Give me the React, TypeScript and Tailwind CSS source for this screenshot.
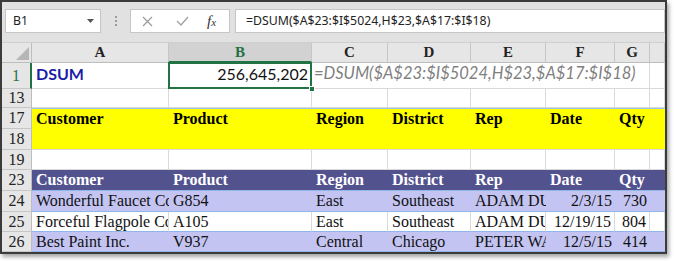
const serif = "font-['Liberation_Serif',serif]";
const calibri = "font-['Lato','Liberation_Sans',sans-serif]";

const W = ["w-[137px]", "w-[143px]", "w-[76px]", "w-[83px]", "w-[75px]", "w-[69px]", "w-[35px]", "w-[15px]"];
const letters = ["A", "B", "C", "D", "E", "F", "G", ""];

type Cell = { t?: string; r?: boolean };

const rows: { n: string; cells: Cell[]; bg: string }[] = [
  {
    n: "24",
    bg: "bg-[#c4c4f3]",
    cells: [{ t: "Wonderful Faucet Co" }, { t: "G854" }, { t: "East" }, { t: "Southeast" }, { t: "ADAM DUNN" }, { t: "2/3/15", r: true }, { t: "730", r: true }, {}],
  },
  {
    n: "25",
    bg: "bg-white",
    cells: [{ t: "Forceful Flagpole Co" }, { t: "A105" }, { t: "East" }, { t: "Southeast" }, { t: "ADAM DUNN" }, { t: "12/19/15", r: true }, { t: "804", r: true }, {}],
  },
  {
    n: "26",
    bg: "bg-[#c4c4f3]",
    cells: [{ t: "Best Paint Inc." }, { t: "V937" }, { t: "Central" }, { t: "Chicago" }, { t: "PETER WATERS" }, { t: "12/5/15", r: true }, { t: "414", r: true }, {}],
  },
];

const heads = ["Customer", "Product", "Region", "District", "Rep", "Date", "Qty", ""];

function RowNum({ n, green }: { n: string; green?: boolean }) {
  return (
    <div
      className={`w-[30px] shrink-0 flex items-center justify-center bg-[#e6e6e6] border-b border-[#c6c6c6] ${serif} text-[16px] ${
        green ? "text-[#217346] border-r-2 border-r-[#217346]" : "text-[#222] border-r border-r-[#bdbdbd]"
      }`}
    >
      {n}
    </div>
  );
}

function Blank() {
  return (
    <>
      {W.map((w, i) => (
        <div key={i} className={`${w} shrink-0 border-r border-b border-[#d9d9d9]`} />
      ))}
    </>
  );
}

export default function App() {
  return (
    <div className="w-[674px] h-[261px] bg-white">
      <div className="w-[667px] border-2 border-[#3b3b3b] bg-white shadow-[2px_3px_4px_rgba(0,0,0,0.35)]">
        {/* formula bar */}
        <div className="h-[40px] bg-[#e1e1e1] flex items-start pt-[7px] pl-[3px] font-['Noto_Sans','Open_Sans',sans-serif] text-[12.3px] text-[#222]">
          <div className="w-[96px] h-[24px] bg-white border border-[#c6c6c6] flex items-center pl-[7px] pr-[6px]">
            <span className="flex-1">B1</span>
            <svg width="7" height="4" viewBox="0 0 7 4">
              <path d="M0 0h7L3.5 4z" fill="#555" />
            </svg>
          </div>
          <div className="w-[29px] h-[24px] flex flex-col items-center justify-center gap-[2px]">
            <span className="w-[2px] h-[2px] bg-[#9a9a9a]" />
            <span className="w-[2px] h-[2px] bg-[#9a9a9a]" />
            <span className="w-[2px] h-[2px] bg-[#9a9a9a]" />
          </div>
          <div className="w-[100px] h-[24px] bg-white border border-[#c6c6c6] flex items-center">
            <svg className="ml-[11px]" width="11" height="11" viewBox="0 0 11 11">
              <path d="M1 1l9 9M10 1l-9 9" stroke="#9a9a9a" strokeWidth="1.2" />
            </svg>
            <svg className="ml-[23px]" width="13" height="10" viewBox="0 0 13 10">
              <path d="M1 5l4 4 7-8" stroke="#a0a0a0" strokeWidth="1.3" fill="none" />
            </svg>
            <span className={`ml-[18px] ${serif} italic text-[15px] text-[#333]`}>
              f<span className="text-[11px]">x</span>
            </span>
          </div>
          <div className="ml-[5px] w-[430px] h-[24px] bg-white border border-[#c6c6c6] flex items-center pl-[10px]">
            =DSUM($A$23:$I$5024,H$23,$A$17:$I$18)
          </div>
        </div>

        {/* column headers */}
        <div className="flex h-[21px] border-t border-[#cfcfcf]">
          <div className="w-[30px] shrink-0 bg-[#e6e6e6] border-r border-b border-[#bdbdbd] flex items-end justify-end p-[2px]">
            <svg width="13" height="13" viewBox="0 0 13 13">
              <path d="M13 0v13H0z" fill="#b5b5b5" />
            </svg>
          </div>
          {letters.map((l, i) => (
            <div
              key={i}
              className={`${W[i]} shrink-0 flex items-center justify-center ${serif} font-bold text-[15px] border-r border-[#c6c6c6] ${
                i === 1
                  ? "bg-[#d2d2d2] text-[#217346] border-b-2 border-b-[#217346]"
                  : "bg-[#e6e6e6] text-[#222] border-b border-b-[#bdbdbd]"
              }`}
            >
              {l}
            </div>
          ))}
        </div>

        {/* row 1 */}
        <div className="flex h-[26px]">
          <RowNum n="1" green />
          <div className={`${W[0]} shrink-0 border-r border-b border-[#d9d9d9] flex items-end pb-[2px] pl-[4px] ${calibri} font-bold text-[16px] text-[#1c1ca8]`}>
            DSUM
          </div>
          <div className={`${W[1]} shrink-0 relative border-b border-[#d9d9d9] flex items-end justify-end pb-[2px] pr-[4px] ${calibri} text-[16px] text-[#111]`}>
            256,645,202
            <div className="absolute -left-px -top-px right-0 bottom-[-1px] border-2 border-[#217346]" />
            <div className="absolute right-[-3px] bottom-[-4px] w-[6px] h-[6px] bg-[#217346] border border-white" />
          </div>
          <div className="w-[338px] shrink-0 border-r border-b border-[#d9d9d9] flex items-end pb-[2px] pl-[2px] whitespace-nowrap">
            <span className={`${calibri} italic text-[16.5px] text-[#808080]`}>=DSUM($A$23:$I$5024,H$23,$A$17:$I$18)</span>
          </div>
          <div className={`${W[7]} shrink-0 border-r border-b border-[#d9d9d9]`} />
        </div>

        {/* row 13 */}
        <div className="flex h-[19px]">
          <RowNum n="13" />
          <Blank />
        </div>

        {/* rows 17-18 criteria */}
        <div className="flex h-[21px]">
          <RowNum n="17" />
          {heads.map((h, i) => (
            <div key={i} className={`${W[i]} shrink-0 bg-[#ffff00] border-t border-t-[#9cc3e8] pl-[4px] flex items-center overflow-hidden whitespace-nowrap ${serif} font-bold text-[16px] text-black`}>
              {h}
            </div>
          ))}
        </div>
        <div className="flex h-[21px]">
          <RowNum n="18" />
          <div className="flex-1 bg-[#ffff00] border-b border-[#d9d9d9]" />
        </div>

        {/* row 19 */}
        <div className="flex h-[20px]">
          <RowNum n="19" />
          <Blank />
        </div>

        {/* row 23 table header */}
        <div className="flex h-[21px]">
          <RowNum n="23" />
          {heads.map((h, i) => (
            <div key={i} className={`${W[i]} shrink-0 bg-[#52528f] border-b border-[#8fb6e6] pl-[4px] flex items-center overflow-hidden whitespace-nowrap ${serif} font-bold text-[16px] text-white`}>
              {h}
            </div>
          ))}
        </div>

        {rows.map((row, ri) => (
          <div key={row.n} className={`flex ${ri === 0 ? "h-[21px]" : "h-[20px]"}`}>
            <RowNum n={row.n} />
            {row.cells.map((c, i) => (
              <div
                key={i}
                className={`${W[i]} shrink-0 ${row.bg} border-b border-b-[#8fb6e6] ${
                  row.bg === "bg-white" ? "border-r border-r-[#d9d9d9]" : ""
                } flex items-center overflow-hidden whitespace-nowrap ${c.r ? "justify-end pr-[3px]" : "pl-[4px]"} ${serif} text-[16px] text-[#111]`}
              >
                {c.t}
              </div>
            ))}
          </div>
        ))}
      </div>
    </div>
  );
}
